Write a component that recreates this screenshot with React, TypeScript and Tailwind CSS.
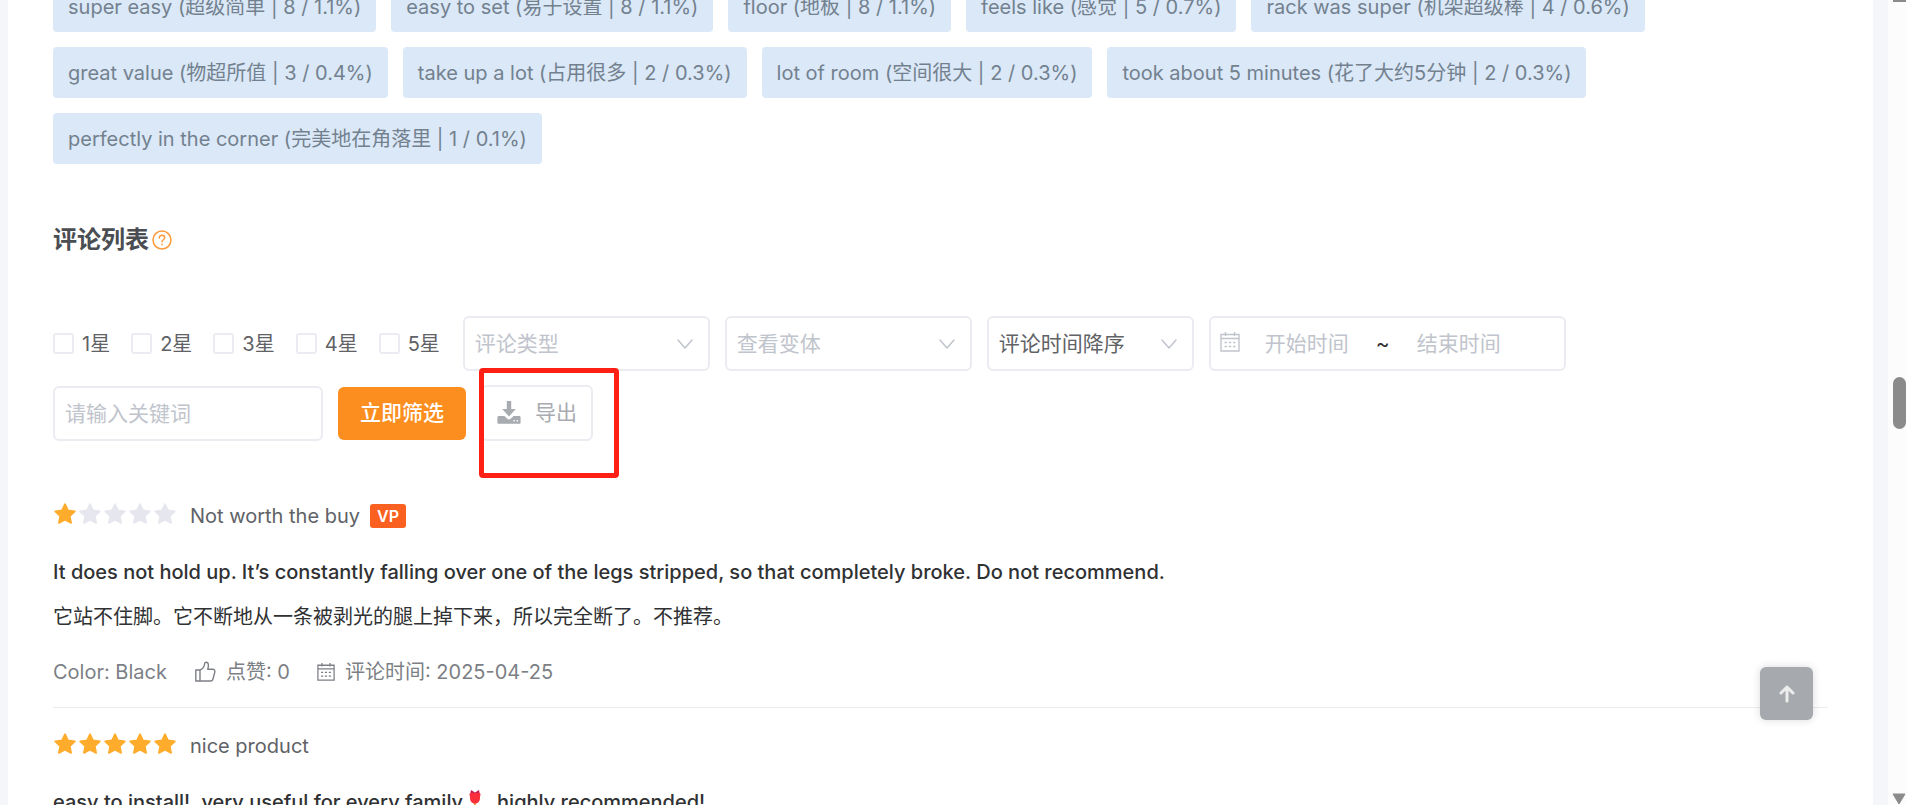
import type { ReactNode } from "react";

type Tag = { text: string; zh: string; count: number; rate: string };

const tagRows: Tag[][] = [
  [
    { text: "super easy", zh: "超级简单", count: 8, rate: "1.1%" },
    { text: "easy to set", zh: "易于设置", count: 8, rate: "1.1%" },
    { text: "floor", zh: "地板", count: 8, rate: "1.1%" },
    { text: "feels like", zh: "感觉", count: 5, rate: "0.7%" },
    { text: "rack was super", zh: "机架超级棒", count: 4, rate: "0.6%" },
  ],
  [
    { text: "great value", zh: "物超所值", count: 3, rate: "0.4%" },
    { text: "take up a lot", zh: "占用很多", count: 2, rate: "0.3%" },
    { text: "lot of room", zh: "空间很大", count: 2, rate: "0.3%" },
    { text: "took about 5 minutes", zh: "花了大约5分钟", count: 2, rate: "0.3%" },
  ],
  [{ text: "perfectly in the corner", zh: "完美地在角落里", count: 1, rate: "0.1%" }],
];

const stars = [1, 2, 3, 4, 5];

function CalendarIcon({ className }: { className: string }) {
  return (
    <svg viewBox="0 0 20 20" fill="none" stroke="currentColor" strokeWidth="1.4" className={className} aria-hidden="true">
      <path d="M1 2.5h18V19H1zM1 6.5h18M5.5 0v4M14.5 0v4" />
      <path d="M4.5 10.5h2.4M8.8 10.5h2.4M13.1 10.5h2.4M4.5 14.5h2.4M8.8 14.5h2.4M13.1 14.5h2.4" />
    </svg>
  );
}

function ThumbIcon() {
  return (
    <svg viewBox="0 0 22 22" fill="none" stroke="currentColor" strokeWidth="1.4" strokeLinejoin="round" className="size-[22px]" aria-hidden="true">
      <path d="M6 9H1.800v11H6M6 9v11h10.600c1.200 0 2-.6 2.300-1.700l1.900-7.200c.4-1.600-.5-2.800-2-2.800h-5.100c.5-1.500.8-3 .7-4.400C14.300 2.400 13.400 1.200 12.200 1.200c-1 0-1.500.6-1.600 1.600C10.300 5.800 8.600 8 6 9z" />
    </svg>
  );
}

function Chevron() {
  return (
    <svg viewBox="0 0 16 10" fill="none" stroke="#c0c4cc" strokeWidth="1.5" strokeLinecap="round" strokeLinejoin="round" className="pointer-events-none absolute right-[17px] top-1/2 h-[10px] w-4 -translate-y-1/2" aria-hidden="true">
      <path d="M1 1l7 8 7-8" />
    </svg>
  );
}

function Rating({ value }: { value: number }) {
  return (
    <div className="flex gap-px pb-1" role="img" aria-label={`${value} / 5`}>
      {stars.map((n) => (
        <svg key={n} viewBox="0 0 22 22" className={n <= value ? "size-6 text-[#ffac2d]" : "size-6 text-[#e6e7ee]"} aria-hidden="true">
          <path
            d="M11 2l2.700 5.600 6.300.9-4.600 4.400 1.200 6.300L11 16.300l-5.600 2.900 1.200-6.300L2 8.500l6.300-.9z"
            fill="currentColor"
            stroke="currentColor"
            strokeWidth="1.6"
            strokeLinejoin="round"
          />
        </svg>
      ))}
    </div>
  );
}

function FilterSelect({ label, className }: { label: string; className: string }) {
  return (
    <div className={`relative h-[55px] ${className}`}>
      <select aria-label={label} className="h-full w-full appearance-none rounded-md border-2 border-[#ebecf2] bg-white px-[10px] text-[21px]">
        <option>{label}</option>
      </select>
      <Chevron />
    </div>
  );
}

function ReviewHead({ rating, title, children }: { rating: number; title: string; children?: ReactNode }) {
  return (
    <div className="flex h-8 items-center">
      <Rating value={rating} />
      <h3 className="ml-[13px] text-[#606266]">{title}</h3>
      {children}
    </div>
  );
}

export default function App() {
  return (
    <div className="relative flex h-screen overflow-hidden bg-[#f5f6f9] pl-2 font-['Inter','Noto_Sans_CJK_SC',sans-serif] text-[20px] text-[#303133]">
      <main className="min-w-0 flex-1 overflow-hidden bg-white px-[45px]">
        <section className="-mt-[19px] flex flex-col gap-[15px]">
          {tagRows.map((row) => (
            <div key={row[0].text} className="flex gap-[15px]">
              {row.map((tag) => (
                <button key={tag.text} type="button" className="h-[51px] rounded-sm bg-[#dae8f7] px-[15px] whitespace-nowrap text-[#73818f]">
                  {tag.text} ({tag.zh} | {tag.count} / {tag.rate})
                </button>
              ))}
            </div>
          ))}
        </section>

        <div className="mt-[58px] flex h-9 items-center gap-[3px]">
          <h2 className="text-2xl font-bold text-[#4a4d52]">评论列表</h2>
          <svg viewBox="0 0 20 20" fill="none" stroke="#ff9a3c" strokeWidth="1.5" strokeLinecap="round" className="size-5" aria-hidden="true">
            <circle cx="10" cy="10" r="9" />
            <path d="M7.3 8c0-1.7 1.1-2.8 2.7-2.8s2.7 1 2.7 2.5c0 2-2.7 2.1-2.7 4.1M10 14.3v.4" />
          </svg>
        </div>

        <form className="mt-[58px]">
          <div className="flex items-center">
            <div className="mr-[23px] flex gap-[21px]">
              {stars.map((n) => (
                <label key={n} className="flex items-center gap-2 text-[#606266]">
                  <input type="checkbox" className="size-[21px] appearance-none rounded-[3px] border-2 border-[#ebecf2]" />
                  {n}星
                </label>
              ))}
            </div>
            <FilterSelect label="评论类型" className="w-[247px] text-[#c0c4cc]" />
            <FilterSelect label="查看变体" className="ml-[15px] w-[247px] text-[#c0c4cc]" />
            <FilterSelect label="评论时间降序" className="ml-[15px] w-[207px] text-[#606266]" />
            <div className="ml-[15px] flex h-[55px] w-[357px] items-center rounded-md border-2 border-[#ebecf2] pl-[9px] text-[21px]">
              <CalendarIcon className="mr-[25px] mb-1 size-5 text-[#c0c4cc]" />
              <input aria-label="开始时间" placeholder="开始时间" className="w-[103px] placeholder:text-[#c0c4cc]" />
              <span className="w-6 pl-2">~</span>
              <input aria-label="结束时间" placeholder="结束时间" className="ml-[25px] w-[110px] placeholder:text-[#c0c4cc]" />
            </div>
          </div>
          <div className="mt-[14px] flex items-center text-[21px]">
            <input aria-label="请输入关键词" placeholder="请输入关键词" className="h-[55px] w-[270px] rounded-md border-2 border-[#ebecf2] px-[10px] placeholder:text-[#c0c4cc]" />
            <button type="button" className="ml-[15px] h-[53px] w-32 rounded-md bg-[#fc8e1f] font-medium text-white">
              立即筛选
            </button>
            <div className="relative ml-[15px]">
              <button type="button" className="flex h-14 w-28 items-center gap-[14px] rounded-md border-2 border-[#ebecf2] pl-[14px] text-[#a8abb0]">
                <svg viewBox="0 0 24 24" fill="currentColor" className="size-6" aria-hidden="true">
                  <path d="M9.8 0h4.4v8h4.600L12 15.500 5.200 8h4.600z" />
                  <path fillRule="evenodd" d="M1.8 15h5.600l2.900 2.700c1 .9 2.400.9 3.400 0l2.900-2.700h5.600c.8 0 1.400.6 1.400 1.400v5c0 .8-.6 1.400-1.400 1.400H1.800c-.8 0-1.400-.6-1.400-1.400v-5c0-.8.6-1.400 1.400-1.400zM16.400 19h1.400v1.400h-1.400zM19.600 19H21v1.400h-1.400z" />
                </svg>
                导出
              </button>
              <div className="pointer-events-none absolute -top-[17px] -left-[2px] h-[110px] w-[140px] rounded-[4px] border-[5px] border-[#ff2015]" />
            </div>
          </div>
        </form>

        <article className="mt-[59px] border-b border-[#ebecf0]">
          <ReviewHead rating={1} title="Not worth the buy">
            <span className="ml-[10px] flex h-6 w-9 items-center justify-center rounded-[3px] bg-[#fa6121] text-base font-semibold text-white">VP</span>
          </ReviewHead>
          <p className="mt-6 leading-8 font-medium">
            It does not hold up. It’s constantly falling over one of the legs stripped, so that completely broke. Do not recommend.
          </p>
          <p className="mt-[13px] leading-8">它站不住脚。它不断地从一条被剥光的腿上掉下来，所以完全断了。不推荐。</p>
          <div className="mt-[23px] mb-[19px] flex h-8 items-center text-[#7c7f85]">
            <span>Color: Black</span>
            <span className="ml-[27px] flex items-center gap-[10px]">
              <ThumbIcon />
              点赞: 0
            </span>
            <span className="ml-[27px] flex items-center gap-[10px]">
              <CalendarIcon className="size-[18px]" />
              评论时间: 2025-04-25
            </span>
          </div>
        </article>

        <article className="pt-[22px]">
          <ReviewHead rating={5} title="nice product" />
          <p className="mt-6 flex items-center leading-8 font-medium">
            easy to install!, very useful for every family
            <svg viewBox="0 0 12 24" className="mr-4 ml-[6px] h-6 w-3" aria-hidden="true">
              <path d="M6 13v10" stroke="#f2a43a" strokeWidth="2" />
              <path d="M2 0l4 2.500L10 0l1 5H1z" fill="#c81e50" />
              <path d="M.5 4C.5 2.500 3.500 3 6 3s5.500-.5 5.500 1c0 1.500-.5 2-.5 3.500 0 3.500-1.500 6-5 6s-5-2.500-5-6C1 6 .5 5.500.5 4z" fill="#f92f3c" />
            </svg>
            highly recommended!
          </p>
        </article>
      </main>

      <div className="ml-[15px] flex w-[18px] flex-col items-end justify-between bg-[#fcfcfc]" aria-hidden="true">
        <div className="h-[2px] w-[13px] bg-[#8b8b8b]" />
        <div className="mt-[11px] h-[52px] w-[13px] rounded-full bg-[#8b8b8b]" />
        <svg viewBox="0 0 14 12" className="h-3 w-[14px]">
          <path d="M1 1h12L7 11z" fill="#8b8b8b" stroke="#8b8b8b" strokeLinejoin="round" />
        </svg>
      </div>

      <button type="button" aria-label="Back to top" className="absolute right-[93px] bottom-[85px] flex size-[53px] items-center justify-center rounded-md bg-[#a6a9ad] shadow-[0_0_8px_rgba(0,0,0,0.15)]">
        <svg viewBox="0 0 16 18" fill="none" stroke="#ededee" strokeWidth="3" strokeLinecap="round" strokeLinejoin="round" className="h-[18px] w-4" aria-hidden="true">
          <path d="M8 16V2.5M2 8l6-6 6 6" />
        </svg>
      </button>
    </div>
  );
}
